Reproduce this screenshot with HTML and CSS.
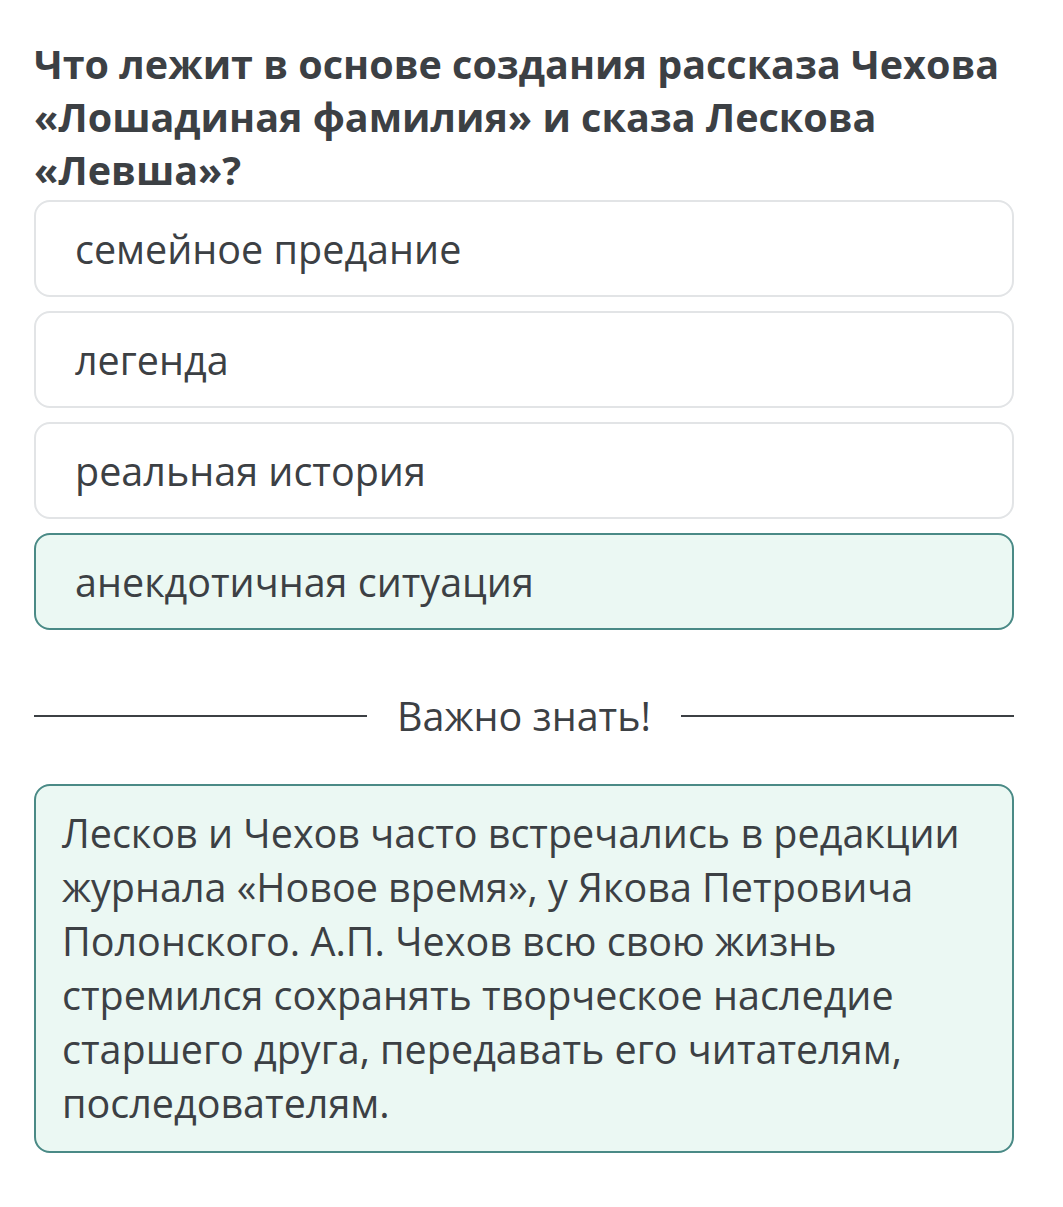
FILE: index.html
```html
<!DOCTYPE html>
<html lang="ru">
<head>
<meta charset="utf-8">
<link rel="stylesheet" href="styles.css">
</head>
<body>
<main class="page">
  <h1 class="question">Что лежит в основе создания рассказа Чехова «Лошадиная фамилия» и сказа Лескова «Левша»?</h1>
  <div class="options">
    <div class="option">семейное предание</div>
    <div class="option">легенда</div>
    <div class="option">реальная история</div>
    <div class="option option-selected">анекдотичная ситуация</div>
  </div>
  <div class="divider">
    <span class="divider-line"></span>
    <span class="divider-text">Важно знать!</span>
    <span class="divider-line"></span>
  </div>
  <div class="info">Лесков и Чехов часто встречались в редакции журнала «Новое время», у Якова Петровича Полонского. А.П. Чехов всю свою жизнь стремился сохранять творческое наследие старшего друга, передавать его читателям, последователям.</div>
</main>
</body>
</html>
```

FILE: styles.css
```css
html, body {
  margin: 0;
  padding: 0;
  background: #ffffff;
}
body {
  font-family: "Open Sans", "Noto Sans", sans-serif;
  color: #3c4044;
}
.page {
  width: 980px;
  margin-left: 34px;
  padding-top: 38px;
}
.question {
  margin: 0 0 3px 0;
  font-size: 39.5px;
  line-height: 53px;
  font-weight: 700;
  color: #3c4044;
}
.options {
  display: flex;
  flex-direction: column;
  gap: 14px;
}
.option {
  height: 97px;
  box-sizing: border-box;
  border: 2px solid #e2e4e6;
  border-radius: 16px;
  padding: 0 0 0 39px;
  display: flex;
  align-items: center;
  font-size: 39.5px;
  color: #3c4044;
  background: #ffffff;
}
.option-selected {
  border-color: #4a8a86;
  background: #ebf8f3;
}
.divider {
  display: flex;
  align-items: center;
  margin-top: 59px;
  gap: 30px;
}
.divider-line {
  flex: 1;
  height: 2px;
  background: #3c4044;
}
.divider-text {
  font-size: 39.5px;
  color: #3c4044;
  line-height: 54px;
}
.info {
  margin-top: 41px;
  box-sizing: border-box;
  border: 2px solid #4a8a86;
  border-radius: 16px;
  background: #ebf8f3;
  padding: 20px 30px 21px 26px;
  font-size: 39.5px;
  line-height: 54px;
  color: #3c4044;
}
```
